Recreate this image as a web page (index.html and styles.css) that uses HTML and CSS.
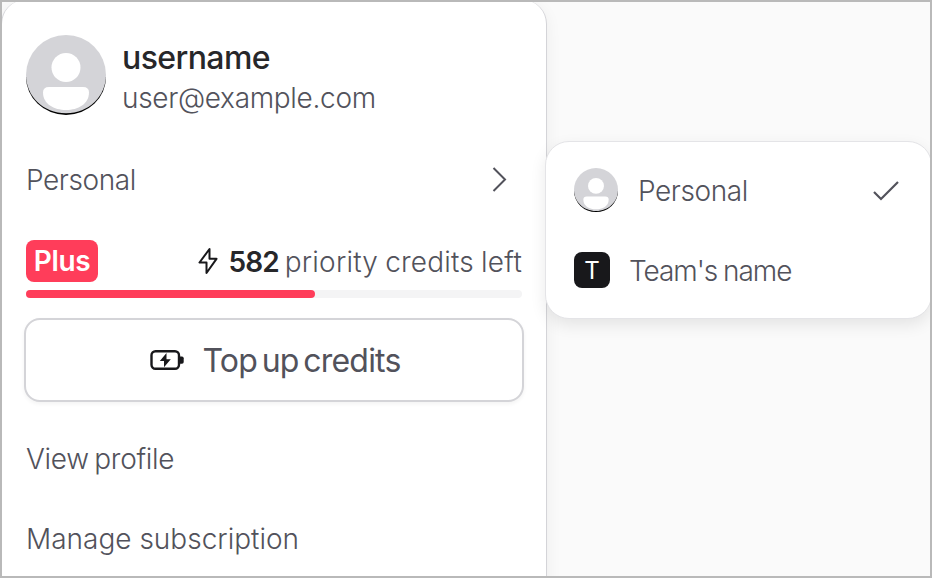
FILE: index.html
```html
<!DOCTYPE html>
<html lang="en">
<head>
    <meta charset="UTF-8">
    <meta name="viewport" content="width=device-width, initial-scale=1.0">
    <title>Account menu</title>
    <link rel="stylesheet" href="styles.css">
</head>
<body>
    <div class="frame">
        <div class="menu">
            <div class="profile">
                <svg class="avatar" viewBox="0 0 80 80">
                    <path d="M0 42a40 38 0 0 0 80 0z" fill="#000"/>
                    <path d="M0 40a40 40 0 0 1 80 0c0 21-17 38.200-40 38.200S0 61 0 40z" fill="#d4d4d8"/>
                    <circle cx="40" cy="32.500" r="14.500" fill="#fff"/>
                    <path d="M23 52h34q6 0 6 5.500C63 69 52 75 40 75S17 69 17 57.500Q17 52 23 52z" fill="#fff"/>
                </svg>
                <div class="profile-text">
                    <div class="username"><span>username</span></div>
                    <div class="email"><span>user@example.com</span></div>
                </div>
            </div>

            <div class="row workspace">
                <span class="personal">Personal</span>
                <svg class="chevron" width="16" height="26" viewBox="0 0 16 26">
                    <path d="M1.500 1L13 12.500 1.500 24" fill="none" stroke="#52525b" stroke-width="2"/>
                </svg>
            </div>

            <div class="usage">
                <div class="plan"><span>Plus</span></div>
                <div class="credits">
                    <svg class="bolt" width="20" height="28" viewBox="0 0 20 28">
                        <path d="M11.500 2L1.500 15.500H8.500V26L18.500 11.800H11.500z" fill="none" stroke="#18181b" stroke-width="2" stroke-linejoin="round"/>
                    </svg>
                    <span class="count">582</span>
                    <span class="credits-label">priority credits left</span>
                </div>
            </div>
            <div class="progress"><div class="progress-fill" style="width: 58.2%"></div></div>

            <button class="topup">
                <svg width="36" height="22" viewBox="0 0 36 22">
                    <rect x="2.500" y="2.300" width="27.500" height="17.500" rx="4" fill="none" stroke="#18181b" stroke-width="2.400"/>
                    <path d="M31 7.500h2q1.700 0 1.700 1.700v3.800q0 1.700-1.700 1.700h-2z" fill="#18181b"/>
                    <path d="M17.500 4L10.800 12H15V18.300L21.800 10.300H17.500z" fill="#18181b"/>
                </svg>
                <span>Top up credits</span>
            </button>

            <div class="row"><span class="view">View profile</span></div>
            <div class="row"><span class="manage">Manage subscription</span></div>
        </div>

        <div class="submenu">
            <div class="option">
                <svg class="avatar-small" viewBox="0 0 80 80">
                    <path d="M0 42a40 38 0 0 0 80 0z" fill="#000"/>
                    <path d="M0 40a40 40 0 0 1 80 0c0 21-17 38.200-40 38.200S0 61 0 40z" fill="#d4d4d8"/>
                    <circle cx="40" cy="32.500" r="14.500" fill="#fff"/>
                    <path d="M23 52h34q6 0 6 5.500C63 69 52 75 40 75S17 69 17 57.500Q17 52 23 52z" fill="#fff"/>
                </svg>
                <span class="personal">Personal</span>
                <svg class="check" width="28" height="22" viewBox="0 0 28 22">
                    <path d="M2 12L9 19 26 2" fill="none" stroke="#52525b" stroke-width="2.200"/>
                </svg>
            </div>
            <div class="option">
                <div class="team-badge">T</div>
                <span class="team-name">Team's name</span>
            </div>
        </div>
    </div>
</body>
</html>
```
FILE: styles.css
```css
* {
    box-sizing: border-box;
}
body {
    margin: 0;
    font-family: Inter, "Liberation Sans", sans-serif;
    font-size: 28px;
    font-weight: 300;
    line-height: 40px;
    color: #52525b;
}
.frame {
    position: relative;
    width: 932px;
    height: 578px;
    overflow: hidden;
    background-color: #fafafa;
}
/* window outline, kept above both menus */
.frame::after {
    content: "";
    position: absolute;
    inset: 0;
    border: 2px solid #b9b9b9;
    pointer-events: none;
}
.menu {
    width: 546px;
    height: 640px;
    margin-left: 1px;
    padding: 35px 24px 0;
    border: 1px solid #d4d4d8;
    border-top: 0;
    border-radius: 24px;
    background-color: #fff;
    box-shadow: 0 4px 16px rgba(0, 0, 0, 0.06);
}
.menu span,
.submenu span {
    white-space: nowrap;
}
.profile {
    display: flex;
    gap: 16px;
    height: 105px;
}
.avatar {
    width: 80px;
    height: 80px;
}
.username {
    margin-top: 3px;
    font-size: 32px;
    font-weight: 500;
    letter-spacing: -0.6px;
    color: #27272a;
}
.email {
    letter-spacing: -0.32px;
}
.row {
    display: flex;
    align-items: center;
    justify-content: space-between;
    height: 80px;
}
.workspace {
    margin-bottom: 20px;
}
.personal {
    letter-spacing: -0.4px;
}
.view {
    letter-spacing: -0.3px;
    word-spacing: -2px;
}
.chevron {
    margin-right: 14px;
}
.usage {
    display: flex;
    align-items: center;
    justify-content: space-between;
    height: 42px;
}
.plan {
    width: 72px;
    height: 42px;
    border-radius: 8px;
    background-color: #ff3d5a;
    color: #fff;
    font-weight: 600;
    letter-spacing: -0.3px;
    line-height: 42px;
    text-align: center;
}
.credits {
    display: flex;
    align-items: center;
    padding-top: 2px;
}
.bolt {
    margin: -2px 10px 0 0;
}
.count {
    margin-right: 6px;
    font-weight: 600;
    letter-spacing: -0.9px;
    color: #27272a;
}
.credits-label {
    letter-spacing: 0.2px;
    word-spacing: -1px;
}
.progress {
    height: 8px;
    margin: 8px 0 20px;
    border-radius: 4px;
    background-color: #f4f4f5;
}
.progress-fill {
    height: 8px;
    border-radius: 4px;
    background-color: #ff3d5a;
}
.topup {
    display: flex;
    align-items: center;
    justify-content: center;
    gap: 17px;
    width: 500px;
    height: 84px;
    margin: 0 -2px 17px;
    padding: 0 0 0 2px;
    border: 2px solid #d4d4d8;
    border-radius: 16px;
    background-color: #fff;
    box-shadow: 0 2px 4px rgba(0, 0, 0, 0.05);
    color: #52525b;
    font-family: inherit;
    font-size: 32px;
    font-weight: 400;
    letter-spacing: -0.8px;
    word-spacing: -3.5px;
}
.submenu {
    position: absolute;
    top: 141px;
    left: 545px;
    width: 387px;
    height: 178px;
    padding: 8px 28px;
    border: 1px solid #e4e4e7;
    border-radius: 24px;
    background-color: #fff;
    box-shadow: 0 6px 16px rgba(0, 0, 0, 0.09);
}
.submenu span {
    padding-top: 2px;
}
.option {
    display: flex;
    align-items: center;
    gap: 20px;
    height: 80px;
}
.avatar-small {
    width: 44px;
    height: 44px;
}
.check {
    margin-top: 2px;
    margin-left: auto;
    margin-right: 3px;
}
.team-badge {
    width: 36px;
    height: 36px;
    border-radius: 8px;
    background-color: #18181b;
    color: #fff;
    font-size: 24px;
    font-weight: 400;
    line-height: 37px;
    text-align: center;
}
.team-name {
    margin-left: -1px;
    letter-spacing: -1.05px;
    word-spacing: -1px;
}
```
